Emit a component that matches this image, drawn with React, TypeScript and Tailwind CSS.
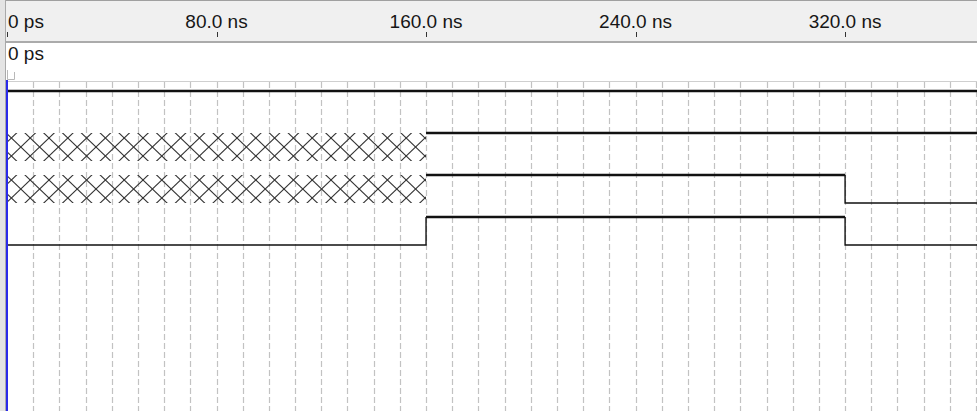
import React from 'react';

// horizontal scale: 80 ns between labelled ticks = 209.5 px
const PX_PER_NS = 2.619;
const tx = (ns: number) => 1 + ns * PX_PER_NS;

const WIDTH = 971; // drawing width, page minus left strip
const HEIGHT = 331;
const ROW = [11, 53, 95, 137]; // high level of each signal (svg coords)
const SWING = 28;

const labels = [
  { ns: 80, text: '80.0 ns' },
  { ns: 160, text: '160.0 ns' },
  { ns: 240, text: '240.0 ns' },
  { ns: 320, text: '320.0 ns' },
];

// "unknown" value: crossing diagonals, clipped to the band
function XBand({ top, from, to, id }: { top: number; from: number; to: number; id: string }) {
  const p = 18.8;
  const w = p * 2;
  const over = 4;
  const lines = [];
  for (let i = -3; i * p < to + w; i++) {
    const a = -4 + i * p;
    lines.push(
      <line key={`d${i}`} x1={a} y1={top - over} x2={a + w} y2={top + SWING + over} />,
      <line key={`u${i}`} x1={a} y1={top + SWING + over} x2={a + w} y2={top - over} />
    );
  }
  return (
    <g>
      <clipPath id={id}>
        <rect x={from} y={top} width={to - from} height={SWING} />
      </clipPath>
      <g clipPath={`url(#${id})`} stroke="#333" strokeWidth={1.1}>
        {lines}
      </g>
    </g>
  );
}

function Waves() {
  const t160 = tx(160);
  const t320 = tx(320);
  const grid = [];
  for (let k = 1; tx(k * 10) < WIDTH; k++) {
    const x = Math.round(tx(k * 10)) + 0.5;
    grid.push(<line key={k} x1={x} y1={2} x2={x} y2={HEIGHT} />);
  }
  return (
    <svg width={WIDTH} height={HEIGHT} className="block">
      <line x1={0} y1={1.5} x2={WIDTH} y2={1.5} stroke="#cfcfcf" strokeWidth={1} />
      <g stroke="#c2c2c2" strokeWidth={1.2} strokeDasharray="6 3">
        {grid}
      </g>

      <g fill="none" stroke="#111" strokeLinejoin="miter">
        {/* row 1: constant high */}
        <line x1={2} y1={ROW[0]} x2={WIDTH} y2={ROW[0]} strokeWidth={2.6} />

        {/* row 2 */}
        <XBand top={ROW[1]} from={2} to={t160} id="xb1" />
        <line x1={t160} y1={ROW[1]} x2={WIDTH} y2={ROW[1]} strokeWidth={2.6} />

        {/* row 3 */}
        <XBand top={ROW[2]} from={2} to={t160} id="xb2" />
        <line x1={t160} y1={ROW[2]} x2={t320} y2={ROW[2]} strokeWidth={2.6} />
        <path d={`M${t320} ${ROW[2]} V${ROW[2] + SWING} H${WIDTH}`} strokeWidth={1.4} />

        {/* row 4 */}
        <path d={`M2 ${ROW[3] + SWING} H${t160} V${ROW[3]}`} strokeWidth={1.4} />
        <line x1={t160} y1={ROW[3]} x2={t320} y2={ROW[3]} strokeWidth={2.6} />
        <path d={`M${t320} ${ROW[3]} V${ROW[3] + SWING} H${WIDTH}`} strokeWidth={1.4} />
      </g>

      {/* cursor */}
      <rect x={0} y={0} width={2} height={HEIGHT} fill="#2b2bea" />
    </svg>
  );
}

export default function App() {
  return (
    <div className="w-[977px] h-[411px] flex overflow-hidden bg-white font-['Liberation_Sans',Arial,sans-serif] text-[#161616]">
      <div className="w-[6px] shrink-0 bg-[#e4e4e4] border-r border-[#a9a9a9]" />

      <div className="flex-1 flex flex-col">
        <div className="relative h-[43px] shrink-0 bg-[#f0f0f0] border-t border-[#a0a0a0] border-b-2 border-b-[#ababab]">
          <span className="absolute left-[2px] top-[11px] text-[19px] leading-[20px]">0 ps</span>
          <span className="absolute left-[1px] top-[31px] w-px h-[5px] bg-[#333]" />
          {labels.map((l) => (
            <React.Fragment key={l.ns}>
              <span
                className="absolute top-[11px] -translate-x-1/2 whitespace-nowrap text-[19px] leading-[20px]"
                style={{ left: tx(l.ns) }}
              >
                {l.text}
              </span>
              <span className="absolute top-[31px] w-px h-[5px] bg-[#333]" style={{ left: Math.round(tx(l.ns)) }} />
            </React.Fragment>
          ))}
        </div>

        <div className="relative h-[37px] shrink-0">
          <span className="block pl-[2px] pt-[1px] text-[19px] leading-[20px]">0 ps</span>
          <svg width="10" height="12" className="absolute left-[1px] bottom-0">
            <path d="M0.5 2 V11.5 H7.5 V4" fill="none" stroke="#b8b8b8" strokeWidth={1} />
          </svg>
        </div>

        <Waves />
      </div>
    </div>
  );
}
